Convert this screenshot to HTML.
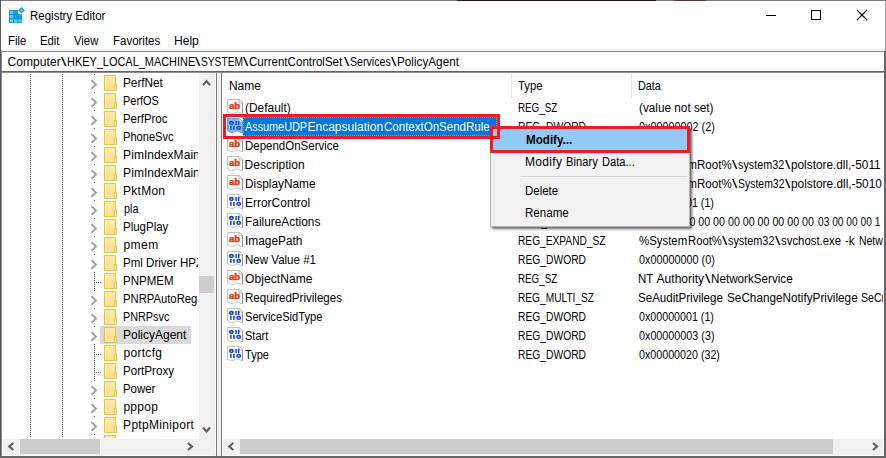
<!DOCTYPE html>
<html><head><meta charset="utf-8"><title>Registry Editor</title>
<style>
html,body{margin:0;padding:0}
body{width:886px;height:458px;position:relative;overflow:hidden;background:#fff;font-family:'Liberation Sans',sans-serif;font-size:12px;color:#000}
.a{position:absolute}
.t{position:absolute;white-space:pre;line-height:14px;transform-origin:0 0}
.clip{position:absolute;overflow:hidden}
svg{position:absolute;overflow:visible}
</style></head>
<body>
<!-- window frame -->
<div class="a" style="left:0px;top:0px;width:886px;height:1px;background:#7b7b7b;"></div><div class="a" style="left:457px;top:0px;width:199px;height:1px;background:#22121f;"></div><div class="a" style="left:674px;top:0px;width:32px;height:1px;background:#5a3326;"></div><div class="a" style="left:0px;top:0px;width:1px;height:458px;background:#585858;"></div><div class="a" style="left:885px;top:1px;width:1px;height:50px;background:#a0a0a0;"></div><div class="a" style="left:1px;top:49px;width:884px;height:2px;background:#f2f2f2;"></div><div class="a" style="left:1px;top:51px;width:884px;height:1px;background:#8a8a8a;"></div><div class="a" style="left:1px;top:52px;width:1px;height:404px;background:#8a8a8a;"></div><div class="a" style="left:1px;top:71px;width:884px;height:1px;background:#636363;"></div><div class="a" style="left:1px;top:72px;width:884px;height:1px;background:#8e8e8e;"></div><div class="a" style="left:884px;top:51px;width:2px;height:407px;background:#666;"></div><div class="a" style="left:0px;top:456px;width:886px;height:2px;background:#666;"></div><!-- title bar -->
<svg style="left:9px;top:7px" width="17" height="17" viewBox="0 0 17 17">
<path d="M0,3 H8.9 V7.2 H13.1 V16 H0 Z" fill="#0f86cc"/>
<g fill="#5ad2ff"><rect x="0.7" y="3.7" width="3.5" height="3.4"/><rect x="0.7" y="8" width="3.5" height="3.4"/><rect x="0.7" y="12.3" width="3.5" height="3.2"/><rect x="5" y="12.3" width="3.5" height="3.2"/><rect x="9.3" y="12.3" width="3.2" height="3.2"/></g>
<g fill="#1ba3e4"><rect x="5" y="3.7" width="3.4" height="3.4"/><rect x="5" y="8" width="3.5" height="3.4"/><rect x="9.3" y="8" width="3.2" height="3.4"/></g>
<polygon points="12.5,0.8 15,3.3 12.5,5.8 10,3.3" fill="#5ad2ff" stroke="#0f86cc" stroke-width="1.1"/>
</svg>
<svg style="left:760px;top:5px" width="115" height="20" viewBox="0 0 115 20" fill="none" stroke="#000" stroke-width="1">
<line x1="6" y1="10.5" x2="16" y2="10.5"/>
<rect x="51.5" y="5.5" width="9" height="9"/>
<line x1="97" y1="5" x2="107" y2="15" stroke-width="1.1"/><line x1="107" y1="5" x2="97" y2="15" stroke-width="1.1"/>
</svg>
<span class="t" style="left:30.2px;top:9px;transform:scaleX(0.9575);">Registry Editor</span>
<!-- menu bar -->
<div><span class="t" style="left:8.0px;top:34px;transform:scaleX(0.9485);">File</span><span class="t" style="left:39.9px;top:34px;transform:scaleX(0.944);">Edit</span><span class="t" style="left:74.3px;top:34px;transform:scaleX(0.9434);">View</span><span class="t" style="left:112.9px;top:34px;transform:scaleX(0.9567);">Favorites</span><span class="t" style="left:174.0px;top:34px;transform:scaleX(1.0065);">Help</span></div>
<!-- address bar -->
<div><span class="t" style="left:7.6px;top:55px;letter-spacing:0.06px;">Computer</span><span class="t" style="left:61.0px;top:55px;transform:scaleX(1.6);">\</span><span class="t" style="left:66.5px;top:55px;transform:scaleX(0.9111);">HKEY_LOCAL_MACHINE</span><span class="t" style="left:195.1px;top:55px;transform:scaleX(1.6);">\</span><span class="t" style="left:200.8px;top:55px;transform:scaleX(0.8498);">SYSTEM</span><span class="t" style="left:242.9px;top:55px;transform:scaleX(1.6);">\</span><span class="t" style="left:248.9px;top:55px;transform:scaleX(0.9643);">CurrentControlSet</span><span class="t" style="left:343.6px;top:55px;transform:scaleX(1.6);">\</span><span class="t" style="left:349.7px;top:55px;transform:scaleX(0.8844);">Services</span><span class="t" style="left:391.3px;top:55px;transform:scaleX(1.6);">\</span><span class="t" style="left:397.0px;top:55px;transform:scaleX(0.9773);">PolicyAgent</span></div>
<!-- tree view -->
<div class="clip" style="left:2px;top:73px;width:196px;height:365px">
<div class="a" style="left:28px;top:1px;width:1px;height:366px;background:transparent;background-image:linear-gradient(#5a5a5a 50%,transparent 50%);background-size:1px 2px;"></div><div class="a" style="left:60px;top:1px;width:1px;height:366px;background:transparent;background-image:linear-gradient(#5a5a5a 50%,transparent 50%);background-size:1px 2px;"></div><div class="a" style="left:92px;top:1px;width:1px;height:1px;background:#5a5a5a;"></div><svg style="left:88px;top:6px" width="8" height="11" viewBox="0 0 8 11"><polyline points="1.5,1.2 6,5.5 1.5,9.8" fill="none" stroke="#a0a0a0" stroke-width="1.9"/></svg><svg style="left:102px;top:2px" width="13" height="16" viewBox="0 0 13 16"><rect x="0.5" y="0.5" width="11" height="15" fill="url(#fg)" stroke="#e6c153"/><rect x="10.5" y="9.5" width="2" height="6" fill="#ffedb0" stroke="#e6c153"/></svg><span class="t" style="left:121.2px;top:3px;transform:scaleX(0.9805);">PerfNet</span>
<div class="a" style="left:92px;top:19px;width:1px;height:1px;background:#5a5a5a;"></div><svg style="left:88px;top:24px" width="8" height="11" viewBox="0 0 8 11"><polyline points="1.5,1.2 6,5.5 1.5,9.8" fill="none" stroke="#a0a0a0" stroke-width="1.9"/></svg><svg style="left:102px;top:20px" width="13" height="16" viewBox="0 0 13 16"><rect x="0.5" y="0.5" width="11" height="15" fill="url(#fg)" stroke="#e6c153"/><rect x="10.5" y="9.5" width="2" height="6" fill="#ffedb0" stroke="#e6c153"/></svg><span class="t" style="left:121.2px;top:21px;transform:scaleX(0.9128);">PerfOS</span>
<div class="a" style="left:92px;top:37px;width:1px;height:1px;background:#5a5a5a;"></div><svg style="left:88px;top:42px" width="8" height="11" viewBox="0 0 8 11"><polyline points="1.5,1.2 6,5.5 1.5,9.8" fill="none" stroke="#a0a0a0" stroke-width="1.9"/></svg><svg style="left:102px;top:38px" width="13" height="16" viewBox="0 0 13 16"><rect x="0.5" y="0.5" width="11" height="15" fill="url(#fg)" stroke="#e6c153"/><rect x="10.5" y="9.5" width="2" height="6" fill="#ffedb0" stroke="#e6c153"/></svg><span class="t" style="left:121.2px;top:39px;transform:scaleX(0.9507);">PerfProc</span>
<div class="a" style="left:92px;top:55px;width:1px;height:1px;background:#5a5a5a;"></div><svg style="left:88px;top:60px" width="8" height="11" viewBox="0 0 8 11"><polyline points="1.5,1.2 6,5.5 1.5,9.8" fill="none" stroke="#a0a0a0" stroke-width="1.9"/></svg><svg style="left:102px;top:56px" width="13" height="16" viewBox="0 0 13 16"><rect x="0.5" y="0.5" width="11" height="15" fill="url(#fg)" stroke="#e6c153"/><rect x="10.5" y="9.5" width="2" height="6" fill="#ffedb0" stroke="#e6c153"/></svg><span class="t" style="left:121.2px;top:57px;transform:scaleX(0.9258);">PhoneSvc</span>
<div class="a" style="left:92px;top:73px;width:1px;height:1px;background:#5a5a5a;"></div><svg style="left:88px;top:78px" width="8" height="11" viewBox="0 0 8 11"><polyline points="1.5,1.2 6,5.5 1.5,9.8" fill="none" stroke="#a0a0a0" stroke-width="1.9"/></svg><svg style="left:102px;top:74px" width="13" height="16" viewBox="0 0 13 16"><rect x="0.5" y="0.5" width="11" height="15" fill="url(#fg)" stroke="#e6c153"/><rect x="10.5" y="9.5" width="2" height="6" fill="#ffedb0" stroke="#e6c153"/></svg><span class="t" style="left:121.1px;top:75px;letter-spacing:0.06px;">PimIndexMaintenanceSvc</span>
<div class="a" style="left:92px;top:91px;width:1px;height:1px;background:#5a5a5a;"></div><svg style="left:88px;top:96px" width="8" height="11" viewBox="0 0 8 11"><polyline points="1.5,1.2 6,5.5 1.5,9.8" fill="none" stroke="#a0a0a0" stroke-width="1.9"/></svg><svg style="left:102px;top:92px" width="13" height="16" viewBox="0 0 13 16"><rect x="0.5" y="0.5" width="11" height="15" fill="url(#fg)" stroke="#e6c153"/><rect x="10.5" y="9.5" width="2" height="6" fill="#ffedb0" stroke="#e6c153"/></svg><span class="t" style="left:121.1px;top:93px;letter-spacing:0.06px;">PimIndexMaintenanceSvc_5f1a2</span>
<div class="a" style="left:92px;top:109px;width:1px;height:1px;background:#5a5a5a;"></div><svg style="left:88px;top:114px" width="8" height="11" viewBox="0 0 8 11"><polyline points="1.5,1.2 6,5.5 1.5,9.8" fill="none" stroke="#a0a0a0" stroke-width="1.9"/></svg><svg style="left:102px;top:110px" width="13" height="16" viewBox="0 0 13 16"><rect x="0.5" y="0.5" width="11" height="15" fill="url(#fg)" stroke="#e6c153"/><rect x="10.5" y="9.5" width="2" height="6" fill="#ffedb0" stroke="#e6c153"/></svg><span class="t" style="left:121.1px;top:111px;letter-spacing:0.24px;">PktMon</span>
<div class="a" style="left:92px;top:127px;width:1px;height:1px;background:#5a5a5a;"></div><svg style="left:88px;top:132px" width="8" height="11" viewBox="0 0 8 11"><polyline points="1.5,1.2 6,5.5 1.5,9.8" fill="none" stroke="#a0a0a0" stroke-width="1.9"/></svg><svg style="left:102px;top:128px" width="13" height="16" viewBox="0 0 13 16"><rect x="0.5" y="0.5" width="11" height="15" fill="url(#fg)" stroke="#e6c153"/><rect x="10.5" y="9.5" width="2" height="6" fill="#ffedb0" stroke="#e6c153"/></svg><span class="t" style="left:121.5px;top:129px;transform:scaleX(0.9);">pla</span>
<div class="a" style="left:92px;top:145px;width:1px;height:1px;background:#5a5a5a;"></div><svg style="left:88px;top:150px" width="8" height="11" viewBox="0 0 8 11"><polyline points="1.5,1.2 6,5.5 1.5,9.8" fill="none" stroke="#a0a0a0" stroke-width="1.9"/></svg><svg style="left:102px;top:146px" width="13" height="16" viewBox="0 0 13 16"><rect x="0.5" y="0.5" width="11" height="15" fill="url(#fg)" stroke="#e6c153"/><rect x="10.5" y="9.5" width="2" height="6" fill="#ffedb0" stroke="#e6c153"/></svg><span class="t" style="left:121.2px;top:147px;transform:scaleX(0.9576);">PlugPlay</span>
<div class="a" style="left:92px;top:163px;width:1px;height:1px;background:#5a5a5a;"></div><svg style="left:88px;top:168px" width="8" height="11" viewBox="0 0 8 11"><polyline points="1.5,1.2 6,5.5 1.5,9.8" fill="none" stroke="#a0a0a0" stroke-width="1.9"/></svg><svg style="left:102px;top:164px" width="13" height="16" viewBox="0 0 13 16"><rect x="0.5" y="0.5" width="11" height="15" fill="url(#fg)" stroke="#e6c153"/><rect x="10.5" y="9.5" width="2" height="6" fill="#ffedb0" stroke="#e6c153"/></svg><span class="t" style="left:121.4px;top:165px;letter-spacing:0.48px;">pmem</span>
<div class="a" style="left:92px;top:181px;width:1px;height:1px;background:#5a5a5a;"></div><svg style="left:88px;top:186px" width="8" height="11" viewBox="0 0 8 11"><polyline points="1.5,1.2 6,5.5 1.5,9.8" fill="none" stroke="#a0a0a0" stroke-width="1.9"/></svg><svg style="left:102px;top:182px" width="13" height="16" viewBox="0 0 13 16"><rect x="0.5" y="0.5" width="11" height="15" fill="url(#fg)" stroke="#e6c153"/><rect x="10.5" y="9.5" width="2" height="6" fill="#ffedb0" stroke="#e6c153"/></svg><span class="t" style="left:121.2px;top:183px;transform:scaleX(0.9609);">Pml Driver HPZ12</span>
<div class="a" style="left:92px;top:199px;width:1px;height:18px;background:transparent;background-image:linear-gradient(#5a5a5a 50%,transparent 50%);background-size:1px 2px;"></div><div class="a" style="left:92px;top:209px;width:8px;height:1px;background:transparent;background-image:linear-gradient(90deg,#5a5a5a 50%,transparent 50%);background-size:2px 1px;"></div><svg style="left:102px;top:200px" width="13" height="16" viewBox="0 0 13 16"><rect x="0.5" y="0.5" width="11" height="15" fill="url(#fg)" stroke="#e6c153"/><rect x="10.5" y="9.5" width="2" height="6" fill="#ffedb0" stroke="#e6c153"/></svg><span class="t" style="left:121.2px;top:201px;transform:scaleX(0.961);">PNPMEM</span>
<div class="a" style="left:92px;top:217px;width:1px;height:1px;background:#5a5a5a;"></div><svg style="left:88px;top:222px" width="8" height="11" viewBox="0 0 8 11"><polyline points="1.5,1.2 6,5.5 1.5,9.8" fill="none" stroke="#a0a0a0" stroke-width="1.9"/></svg><svg style="left:102px;top:218px" width="13" height="16" viewBox="0 0 13 16"><rect x="0.5" y="0.5" width="11" height="15" fill="url(#fg)" stroke="#e6c153"/><rect x="10.5" y="9.5" width="2" height="6" fill="#ffedb0" stroke="#e6c153"/></svg><span class="t" style="left:121.2px;top:219px;transform:scaleX(0.9386);">PNRPAutoReg</span>
<div class="a" style="left:92px;top:235px;width:1px;height:1px;background:#5a5a5a;"></div><svg style="left:88px;top:240px" width="8" height="11" viewBox="0 0 8 11"><polyline points="1.5,1.2 6,5.5 1.5,9.8" fill="none" stroke="#a0a0a0" stroke-width="1.9"/></svg><svg style="left:102px;top:236px" width="13" height="16" viewBox="0 0 13 16"><rect x="0.5" y="0.5" width="11" height="15" fill="url(#fg)" stroke="#e6c153"/><rect x="10.5" y="9.5" width="2" height="6" fill="#ffedb0" stroke="#e6c153"/></svg><span class="t" style="left:121.2px;top:237px;transform:scaleX(0.9016);">PNRPsvc</span>
<div class="a" style="left:92px;top:253px;width:1px;height:1px;background:#5a5a5a;"></div><svg style="left:88px;top:258px" width="8" height="11" viewBox="0 0 8 11"><polyline points="1.5,1.2 6,5.5 1.5,9.8" fill="none" stroke="#a0a0a0" stroke-width="1.9"/></svg><div class="a" style="left:98px;top:253px;width:91px;height:18px;background:#d9d9d9;"></div><svg style="left:102px;top:254px" width="13" height="16" viewBox="0 0 13 16"><rect x="0.5" y="0.5" width="11" height="15" fill="url(#fg)" stroke="#e6c153"/><rect x="10.5" y="9.5" width="2" height="6" fill="#ffedb0" stroke="#e6c153"/></svg><span class="t" style="left:121.1px;top:255px;transform:scaleX(0.9991);">PolicyAgent</span>
<div class="a" style="left:92px;top:271px;width:1px;height:18px;background:transparent;background-image:linear-gradient(#5a5a5a 50%,transparent 50%);background-size:1px 2px;"></div><div class="a" style="left:92px;top:281px;width:8px;height:1px;background:transparent;background-image:linear-gradient(90deg,#5a5a5a 50%,transparent 50%);background-size:2px 1px;"></div><svg style="left:102px;top:272px" width="13" height="16" viewBox="0 0 13 16"><rect x="0.5" y="0.5" width="11" height="15" fill="url(#fg)" stroke="#e6c153"/><rect x="10.5" y="9.5" width="2" height="6" fill="#ffedb0" stroke="#e6c153"/></svg><span class="t" style="left:121.4px;top:273px;letter-spacing:0.32px;">portcfg</span>
<div class="a" style="left:92px;top:289px;width:1px;height:18px;background:transparent;background-image:linear-gradient(#5a5a5a 50%,transparent 50%);background-size:1px 2px;"></div><div class="a" style="left:92px;top:299px;width:8px;height:1px;background:transparent;background-image:linear-gradient(90deg,#5a5a5a 50%,transparent 50%);background-size:2px 1px;"></div><svg style="left:102px;top:290px" width="13" height="16" viewBox="0 0 13 16"><rect x="0.5" y="0.5" width="11" height="15" fill="url(#fg)" stroke="#e6c153"/><rect x="10.5" y="9.5" width="2" height="6" fill="#ffedb0" stroke="#e6c153"/></svg><span class="t" style="left:121.2px;top:291px;transform:scaleX(0.9685);">PortProxy</span>
<div class="a" style="left:92px;top:307px;width:1px;height:1px;background:#5a5a5a;"></div><svg style="left:88px;top:312px" width="8" height="11" viewBox="0 0 8 11"><polyline points="1.5,1.2 6,5.5 1.5,9.8" fill="none" stroke="#a0a0a0" stroke-width="1.9"/></svg><svg style="left:102px;top:308px" width="13" height="16" viewBox="0 0 13 16"><rect x="0.5" y="0.5" width="11" height="15" fill="url(#fg)" stroke="#e6c153"/><rect x="10.5" y="9.5" width="2" height="6" fill="#ffedb0" stroke="#e6c153"/></svg><span class="t" style="left:121.2px;top:309px;transform:scaleX(0.9522);">Power</span>
<div class="a" style="left:92px;top:325px;width:1px;height:1px;background:#5a5a5a;"></div><svg style="left:88px;top:330px" width="8" height="11" viewBox="0 0 8 11"><polyline points="1.5,1.2 6,5.5 1.5,9.8" fill="none" stroke="#a0a0a0" stroke-width="1.9"/></svg><svg style="left:102px;top:326px" width="13" height="16" viewBox="0 0 13 16"><rect x="0.5" y="0.5" width="11" height="15" fill="url(#fg)" stroke="#e6c153"/><rect x="10.5" y="9.5" width="2" height="6" fill="#ffedb0" stroke="#e6c153"/></svg><span class="t" style="left:121.4px;top:327px;letter-spacing:0.31px;">pppop</span>
<div class="a" style="left:92px;top:343px;width:1px;height:1px;background:#5a5a5a;"></div><svg style="left:88px;top:348px" width="8" height="11" viewBox="0 0 8 11"><polyline points="1.5,1.2 6,5.5 1.5,9.8" fill="none" stroke="#a0a0a0" stroke-width="1.9"/></svg><svg style="left:102px;top:344px" width="13" height="16" viewBox="0 0 13 16"><rect x="0.5" y="0.5" width="11" height="15" fill="url(#fg)" stroke="#e6c153"/><rect x="10.5" y="9.5" width="2" height="6" fill="#ffedb0" stroke="#e6c153"/></svg><span class="t" style="left:121.1px;top:345px;letter-spacing:0.3px;">PptpMiniport</span>
<div class="a" style="left:92px;top:361px;width:1px;height:1px;background:#5a5a5a;"></div><svg style="left:88px;top:366px" width="8" height="11" viewBox="0 0 8 11"><polyline points="1.5,1.2 6,5.5 1.5,9.8" fill="none" stroke="#a0a0a0" stroke-width="1.9"/></svg><svg style="left:102px;top:362px" width="13" height="16" viewBox="0 0 13 16"><rect x="0.5" y="0.5" width="11" height="15" fill="url(#fg)" stroke="#e6c153"/><rect x="10.5" y="9.5" width="2" height="6" fill="#ffedb0" stroke="#e6c153"/></svg>
</div>
<svg width="0" height="0" style="left:0;top:0"><defs><linearGradient id="fg" x1="0" y1="0" x2="0" y2="1"><stop offset="0" stop-color="#ffeaa6"/><stop offset="1" stop-color="#ffe08a"/></linearGradient></defs></svg>
<div class="a" style="left:199px;top:73px;width:16px;height:366px;background:#f0f0f0;"></div><div class="a" style="left:3px;top:439px;width:212px;height:16px;background:#f0f0f0;"></div><div class="a" style="left:199px;top:276px;width:15px;height:17px;background:#cdcdcd;"></div><div class="a" style="left:20px;top:439px;width:80px;height:15px;background:#cdcdcd;"></div><svg style="left:0;top:0" width="1" height="1"><polyline points="203.0,85.1 206.5,81.1 210.0,85.1" fill="none" stroke="#606060" stroke-width="2.2"/></svg><svg style="left:0;top:0" width="1" height="1"><polyline points="203.0,427.5 206.5,431.5 210.0,427.5" fill="none" stroke="#606060" stroke-width="2.2"/></svg><svg style="left:0;top:0" width="1" height="1"><polyline points="13.3,443.0 9.3,446.5 13.3,450.0" fill="none" stroke="#606060" stroke-width="2.2"/></svg><svg style="left:0;top:0" width="1" height="1"><polyline points="188.0,443.0 192.0,446.5 188.0,450.0" fill="none" stroke="#606060" stroke-width="2.2"/></svg><div class="a" style="left:216px;top:73px;width:1px;height:383px;background:#7a7a7a;"></div><div class="a" style="left:217px;top:73px;width:4px;height:383px;background:#f0f0f0;"></div><div class="a" style="left:221px;top:73px;width:1px;height:383px;background:#7a7a7a;"></div>
<!-- list view -->
<div class="a" style="left:511px;top:74px;width:1px;height:24px;background:#e5e5e5;"></div><div class="a" style="left:631px;top:74px;width:1px;height:24px;background:#e5e5e5;"></div><span class="t" style="left:228.9px;top:79px;letter-spacing:0.02px;">Name</span><span class="t" style="left:518.0px;top:79px;transform:scaleX(0.9462);">Type</span><span class="t" style="left:638.3px;top:79px;transform:scaleX(0.902);">Data</span>
<div class="a" style="left:243px;top:117px;width:254px;height:19px;background:#0078d7;outline:1px dotted #e08a3c;outline-offset:-1px;"></div><svg style="left:227px;top:99px" width="16" height="16" viewBox="0 0 16 16"><path d="M0.5,0.5 H12 L15.5,4 V14.6 C13.5,15 12.5,13 10.5,13 C8,13 7,14.6 4.5,14.6 C3,14.6 2.5,13.2 0.5,13 Z" fill="#fff" stroke="#c4c4c4"/><path d="M12,0.5 L15.5,4 V14.6" fill="none" stroke="#8f8f8f"/><path d="M12,0.5 V4 H15.5" fill="#fff" stroke="#a0a0a0" stroke-width="0.8"/><text x="1.9" y="10.1" font-family="'Liberation Sans',sans-serif" font-size="9.6" font-weight="bold" fill="#d8401a" stroke="#d8401a" stroke-width="0.5" letter-spacing="0">ab</text></svg><span><span class="t" style="left:244.9px;top:101px;transform:scaleX(0.9952);">(Default)</span></span><span class="t" style="left:518.4px;top:101px;transform:scaleX(0.8168);">REG_SZ</span><div class="clip" style="left:632px;top:98px;width:251px;height:19px"><span class="t" style="left:6.7px;top:3px;transform:scaleX(0.98);">(value not set)</span></div>
<svg style="left:227px;top:118px" width="16" height="16" viewBox="0 0 16 16"><path d="M0.5,0.5 H12 L15.5,4 V14.6 C13.5,15 12.5,13 10.5,13 C8,13 7,14.6 4.5,14.6 C3,14.6 2.5,13.2 0.5,13 Z" fill="#86b8ec" stroke="#5f9fe2"/><path d="M12,0.5 L15.5,4 V14.6" fill="none" stroke="#8f8f8f"/><path d="M12,0.5 V4 H15.5" fill="#fff" stroke="#a0a0a0" stroke-width="0.8"/><g fill="none" stroke="#1458d0" stroke-width="1.6"><ellipse cx="4.4" cy="5" rx="1.75" ry="1.35"/><ellipse cx="11.7" cy="9.9" rx="1.75" ry="1.35"/></g><g fill="#1458d0"><rect x="8.3" y="3" width="1.5" height="4"/><rect x="10.8" y="3" width="1.6" height="4"/><rect x="3.1" y="7.9" width="1.5" height="4"/><rect x="6.1" y="7.9" width="1.6" height="4"/></g></svg><span><span class="t" style="left:245.2px;top:120px;transform:scaleX(0.9027);color:#fff;">AssumeUDP</span><span class="t" style="left:307.4px;top:120px;letter-spacing:0.03px;color:#fff;">Encapsulation</span><span class="t" style="left:384.2px;top:120px;transform:scaleX(0.96);color:#fff;">ContextOnSendRule</span></span><span class="t" style="left:518.4px;top:120px;transform:scaleX(0.8575);">REG_DWORD</span><div class="clip" style="left:632px;top:117px;width:251px;height:19px"><span class="t" style="left:6.9px;top:3px;transform:scaleX(0.9018);">0x00000002 (2)</span></div>
<svg style="left:227px;top:137px" width="16" height="16" viewBox="0 0 16 16"><path d="M0.5,0.5 H12 L15.5,4 V14.6 C13.5,15 12.5,13 10.5,13 C8,13 7,14.6 4.5,14.6 C3,14.6 2.5,13.2 0.5,13 Z" fill="#fff" stroke="#c4c4c4"/><path d="M12,0.5 L15.5,4 V14.6" fill="none" stroke="#8f8f8f"/><path d="M12,0.5 V4 H15.5" fill="#fff" stroke="#a0a0a0" stroke-width="0.8"/><text x="1.9" y="10.1" font-family="'Liberation Sans',sans-serif" font-size="9.6" font-weight="bold" fill="#d8401a" stroke="#d8401a" stroke-width="0.5" letter-spacing="0">ab</text></svg><span><span class="t" style="left:244.7px;top:139px;transform:scaleX(0.9578);">DependOnService</span></span><span class="t" style="left:518.4px;top:139px;transform:scaleX(0.8471);">REG_MULTI_SZ</span>
<svg style="left:227px;top:156px" width="16" height="16" viewBox="0 0 16 16"><path d="M0.5,0.5 H12 L15.5,4 V14.6 C13.5,15 12.5,13 10.5,13 C8,13 7,14.6 4.5,14.6 C3,14.6 2.5,13.2 0.5,13 Z" fill="#fff" stroke="#c4c4c4"/><path d="M12,0.5 L15.5,4 V14.6" fill="none" stroke="#8f8f8f"/><path d="M12,0.5 V4 H15.5" fill="#fff" stroke="#a0a0a0" stroke-width="0.8"/><text x="1.9" y="10.1" font-family="'Liberation Sans',sans-serif" font-size="9.6" font-weight="bold" fill="#d8401a" stroke="#d8401a" stroke-width="0.5" letter-spacing="0">ab</text></svg><span><span class="t" style="left:244.6px;top:158px;">Description</span></span><span class="t" style="left:518.4px;top:158px;transform:scaleX(0.8168);">REG_SZ</span><div class="clip" style="left:632px;top:155px;width:251px;height:19px"><span class="t" style="left:6.5px;top:3px;transform:scaleX(0.9203);">@%System</span><span class="t" style="left:64.9px;top:3px;transform:scaleX(0.9648);">Root%</span><span class="t" style="left:100.1px;top:3px;transform:scaleX(1.6);">\</span><span class="t" style="left:106.1px;top:3px;transform:scaleX(0.8981);">system32</span><span class="t" style="left:152.5px;top:3px;transform:scaleX(1.6);">\</span><span class="t" style="left:158.9px;top:3px;transform:scaleX(0.9833);">polstore.dll,-5011</span></div>
<svg style="left:227px;top:175px" width="16" height="16" viewBox="0 0 16 16"><path d="M0.5,0.5 H12 L15.5,4 V14.6 C13.5,15 12.5,13 10.5,13 C8,13 7,14.6 4.5,14.6 C3,14.6 2.5,13.2 0.5,13 Z" fill="#fff" stroke="#c4c4c4"/><path d="M12,0.5 L15.5,4 V14.6" fill="none" stroke="#8f8f8f"/><path d="M12,0.5 V4 H15.5" fill="#fff" stroke="#a0a0a0" stroke-width="0.8"/><text x="1.9" y="10.1" font-family="'Liberation Sans',sans-serif" font-size="9.6" font-weight="bold" fill="#d8401a" stroke="#d8401a" stroke-width="0.5" letter-spacing="0">ab</text></svg><span><span class="t" style="left:244.7px;top:177px;transform:scaleX(0.9895);">DisplayName</span></span><span class="t" style="left:518.4px;top:177px;transform:scaleX(0.8168);">REG_SZ</span><div class="clip" style="left:632px;top:174px;width:251px;height:19px"><span class="t" style="left:6.5px;top:3px;transform:scaleX(0.9203);">@%System</span><span class="t" style="left:64.9px;top:3px;transform:scaleX(0.9648);">Root%</span><span class="t" style="left:100.1px;top:3px;transform:scaleX(1.6);">\</span><span class="t" style="left:105.5px;top:3px;transform:scaleX(0.8705);">System32</span><span class="t" style="left:152.5px;top:3px;transform:scaleX(1.6);">\</span><span class="t" style="left:158.9px;top:3px;transform:scaleX(0.987);">polstore.dll,-5010</span></div>
<svg style="left:227px;top:194px" width="16" height="16" viewBox="0 0 16 16"><path d="M0.5,0.5 H12 L15.5,4 V14.6 C13.5,15 12.5,13 10.5,13 C8,13 7,14.6 4.5,14.6 C3,14.6 2.5,13.2 0.5,13 Z" fill="#fff" stroke="#c4c4c4"/><path d="M12,0.5 L15.5,4 V14.6" fill="none" stroke="#8f8f8f"/><path d="M12,0.5 V4 H15.5" fill="#fff" stroke="#a0a0a0" stroke-width="0.8"/><g fill="none" stroke="#1040dc" stroke-width="1.6"><ellipse cx="4.4" cy="5" rx="1.75" ry="1.35"/><ellipse cx="11.7" cy="9.9" rx="1.75" ry="1.35"/></g><g fill="#1040dc"><rect x="8.3" y="3" width="1.5" height="4"/><rect x="10.8" y="3" width="1.6" height="4"/><rect x="3.1" y="7.9" width="1.5" height="4"/><rect x="6.1" y="7.9" width="1.6" height="4"/></g></svg><span><span class="t" style="left:244.7px;top:196px;transform:scaleX(0.997);">ErrorControl</span></span><span class="t" style="left:518.4px;top:196px;transform:scaleX(0.8575);">REG_DWORD</span><div class="clip" style="left:632px;top:193px;width:251px;height:19px"><span class="t" style="left:6.9px;top:3px;transform:scaleX(0.891);">0x00000001 (1)</span></div>
<svg style="left:227px;top:213px" width="16" height="16" viewBox="0 0 16 16"><path d="M0.5,0.5 H12 L15.5,4 V14.6 C13.5,15 12.5,13 10.5,13 C8,13 7,14.6 4.5,14.6 C3,14.6 2.5,13.2 0.5,13 Z" fill="#fff" stroke="#c4c4c4"/><path d="M12,0.5 L15.5,4 V14.6" fill="none" stroke="#8f8f8f"/><path d="M12,0.5 V4 H15.5" fill="#fff" stroke="#a0a0a0" stroke-width="0.8"/><g fill="none" stroke="#1040dc" stroke-width="1.6"><ellipse cx="4.4" cy="5" rx="1.75" ry="1.35"/><ellipse cx="11.7" cy="9.9" rx="1.75" ry="1.35"/></g><g fill="#1040dc"><rect x="8.3" y="3" width="1.5" height="4"/><rect x="10.8" y="3" width="1.6" height="4"/><rect x="3.1" y="7.9" width="1.5" height="4"/><rect x="6.1" y="7.9" width="1.6" height="4"/></g></svg><span><span class="t" style="left:244.7px;top:215px;transform:scaleX(0.9913);">FailureActions</span></span><span class="t" style="left:518.3px;top:215px;transform:scaleX(0.8896);">REG_BINARY</span><div class="clip" style="left:632px;top:212px;width:251px;height:19px"><span class="t" style="left:6.9px;top:3px;transform:scaleX(0.8887);">80 51 01 00 00 00 00 00 00 00 00 00 </span><span class="t" style="left:186.3px;top:3px;transform:scaleX(0.8491);">03 00 00 00 1</span></div>
<svg style="left:227px;top:232px" width="16" height="16" viewBox="0 0 16 16"><path d="M0.5,0.5 H12 L15.5,4 V14.6 C13.5,15 12.5,13 10.5,13 C8,13 7,14.6 4.5,14.6 C3,14.6 2.5,13.2 0.5,13 Z" fill="#fff" stroke="#c4c4c4"/><path d="M12,0.5 L15.5,4 V14.6" fill="none" stroke="#8f8f8f"/><path d="M12,0.5 V4 H15.5" fill="#fff" stroke="#a0a0a0" stroke-width="0.8"/><text x="1.9" y="10.1" font-family="'Liberation Sans',sans-serif" font-size="9.6" font-weight="bold" fill="#d8401a" stroke="#d8401a" stroke-width="0.5" letter-spacing="0">ab</text></svg><span><span class="t" style="left:244.5px;top:234px;transform:scaleX(0.9898);">ImagePath</span></span><span class="t" style="left:518.4px;top:234px;transform:scaleX(0.8484);">REG_EXPAND_SZ</span><div class="clip" style="left:632px;top:231px;width:251px;height:19px"><span class="t" style="left:6.9px;top:3px;transform:scaleX(0.9518);">%System</span><span class="t" style="left:55.9px;top:3px;transform:scaleX(0.9415);">Root%</span><span class="t" style="left:90.4px;top:3px;transform:scaleX(1.6);">\</span><span class="t" style="left:96.3px;top:3px;transform:scaleX(0.9039);">system32</span><span class="t" style="left:142.8px;top:3px;transform:scaleX(1.6);">\</span><span class="t" style="left:148.7px;top:3px;transform:scaleX(0.9493);">svchost.exe </span><span class="t" style="left:213.4px;top:3px;transform:scaleX(0.9459);">-k </span><span class="t" style="left:227.1px;top:3px;transform:scaleX(0.8719);">NetworkServiceNetworkRestricted -p</span></div>
<svg style="left:227px;top:251px" width="16" height="16" viewBox="0 0 16 16"><path d="M0.5,0.5 H12 L15.5,4 V14.6 C13.5,15 12.5,13 10.5,13 C8,13 7,14.6 4.5,14.6 C3,14.6 2.5,13.2 0.5,13 Z" fill="#fff" stroke="#c4c4c4"/><path d="M12,0.5 L15.5,4 V14.6" fill="none" stroke="#8f8f8f"/><path d="M12,0.5 V4 H15.5" fill="#fff" stroke="#a0a0a0" stroke-width="0.8"/><g fill="none" stroke="#1040dc" stroke-width="1.6"><ellipse cx="4.4" cy="5" rx="1.75" ry="1.35"/><ellipse cx="11.7" cy="9.9" rx="1.75" ry="1.35"/></g><g fill="#1040dc"><rect x="8.3" y="3" width="1.5" height="4"/><rect x="10.8" y="3" width="1.6" height="4"/><rect x="3.1" y="7.9" width="1.5" height="4"/><rect x="6.1" y="7.9" width="1.6" height="4"/></g></svg><span><span class="t" style="left:244.7px;top:253px;transform:scaleX(0.9615);">New Value #1</span></span><span class="t" style="left:518.4px;top:253px;transform:scaleX(0.8575);">REG_DWORD</span><div class="clip" style="left:632px;top:250px;width:251px;height:19px"><span class="t" style="left:6.9px;top:3px;transform:scaleX(0.9018);">0x00000000 (0)</span></div>
<svg style="left:227px;top:270px" width="16" height="16" viewBox="0 0 16 16"><path d="M0.5,0.5 H12 L15.5,4 V14.6 C13.5,15 12.5,13 10.5,13 C8,13 7,14.6 4.5,14.6 C3,14.6 2.5,13.2 0.5,13 Z" fill="#fff" stroke="#c4c4c4"/><path d="M12,0.5 L15.5,4 V14.6" fill="none" stroke="#8f8f8f"/><path d="M12,0.5 V4 H15.5" fill="#fff" stroke="#a0a0a0" stroke-width="0.8"/><text x="1.9" y="10.1" font-family="'Liberation Sans',sans-serif" font-size="9.6" font-weight="bold" fill="#d8401a" stroke="#d8401a" stroke-width="0.5" letter-spacing="0">ab</text></svg><span><span class="t" style="left:245.1px;top:272px;letter-spacing:0.08px;">ObjectName</span></span><span class="t" style="left:518.4px;top:272px;transform:scaleX(0.8168);">REG_SZ</span><div class="clip" style="left:632px;top:269px;width:251px;height:19px"><span class="t" style="left:6.2px;top:3px;transform:scaleX(0.9546);">NT </span><span class="t" style="left:24.6px;top:3px;letter-spacing:0.01px;">Authority</span><span class="t" style="left:72.9px;top:3px;transform:scaleX(1.6);">\</span><span class="t" style="left:79.0px;top:3px;transform:scaleX(0.9722);">NetworkService</span></div>
<svg style="left:227px;top:289px" width="16" height="16" viewBox="0 0 16 16"><path d="M0.5,0.5 H12 L15.5,4 V14.6 C13.5,15 12.5,13 10.5,13 C8,13 7,14.6 4.5,14.6 C3,14.6 2.5,13.2 0.5,13 Z" fill="#fff" stroke="#c4c4c4"/><path d="M12,0.5 L15.5,4 V14.6" fill="none" stroke="#8f8f8f"/><path d="M12,0.5 V4 H15.5" fill="#fff" stroke="#a0a0a0" stroke-width="0.8"/><text x="1.9" y="10.1" font-family="'Liberation Sans',sans-serif" font-size="9.6" font-weight="bold" fill="#d8401a" stroke="#d8401a" stroke-width="0.5" letter-spacing="0">ab</text></svg><span><span class="t" style="left:244.7px;top:291px;transform:scaleX(0.9625);">RequiredPrivileges</span></span><span class="t" style="left:518.4px;top:291px;transform:scaleX(0.8471);">REG_MULTI_SZ</span><div class="clip" style="left:632px;top:288px;width:251px;height:19px"><span class="t" style="left:6.4px;top:3px;transform:scaleX(0.9635);">SeAuditPrivilege </span><span class="t" style="left:95.4px;top:3px;transform:scaleX(0.9796);">SeChangeNotifyPrivilege </span><span class="t" style="left:229.0px;top:3px;transform:scaleX(0.8821);">SeCreateGlobalPrivilege</span></div>
<svg style="left:227px;top:308px" width="16" height="16" viewBox="0 0 16 16"><path d="M0.5,0.5 H12 L15.5,4 V14.6 C13.5,15 12.5,13 10.5,13 C8,13 7,14.6 4.5,14.6 C3,14.6 2.5,13.2 0.5,13 Z" fill="#fff" stroke="#c4c4c4"/><path d="M12,0.5 L15.5,4 V14.6" fill="none" stroke="#8f8f8f"/><path d="M12,0.5 V4 H15.5" fill="#fff" stroke="#a0a0a0" stroke-width="0.8"/><g fill="none" stroke="#1040dc" stroke-width="1.6"><ellipse cx="4.4" cy="5" rx="1.75" ry="1.35"/><ellipse cx="11.7" cy="9.9" rx="1.75" ry="1.35"/></g><g fill="#1040dc"><rect x="8.3" y="3" width="1.5" height="4"/><rect x="10.8" y="3" width="1.6" height="4"/><rect x="3.1" y="7.9" width="1.5" height="4"/><rect x="6.1" y="7.9" width="1.6" height="4"/></g></svg><span><span class="t" style="left:244.9px;top:310px;transform:scaleX(0.9279);">ServiceSidType</span></span><span class="t" style="left:518.4px;top:310px;transform:scaleX(0.8575);">REG_DWORD</span><div class="clip" style="left:632px;top:307px;width:251px;height:19px"><span class="t" style="left:6.9px;top:3px;transform:scaleX(0.891);">0x00000001 (1)</span></div>
<svg style="left:227px;top:327px" width="16" height="16" viewBox="0 0 16 16"><path d="M0.5,0.5 H12 L15.5,4 V14.6 C13.5,15 12.5,13 10.5,13 C8,13 7,14.6 4.5,14.6 C3,14.6 2.5,13.2 0.5,13 Z" fill="#fff" stroke="#c4c4c4"/><path d="M12,0.5 L15.5,4 V14.6" fill="none" stroke="#8f8f8f"/><path d="M12,0.5 V4 H15.5" fill="#fff" stroke="#a0a0a0" stroke-width="0.8"/><g fill="none" stroke="#1040dc" stroke-width="1.6"><ellipse cx="4.4" cy="5" rx="1.75" ry="1.35"/><ellipse cx="11.7" cy="9.9" rx="1.75" ry="1.35"/></g><g fill="#1040dc"><rect x="8.3" y="3" width="1.5" height="4"/><rect x="10.8" y="3" width="1.6" height="4"/><rect x="3.1" y="7.9" width="1.5" height="4"/><rect x="6.1" y="7.9" width="1.6" height="4"/></g></svg><span><span class="t" style="left:244.9px;top:329px;transform:scaleX(0.9197);">Start</span></span><span class="t" style="left:518.4px;top:329px;transform:scaleX(0.8575);">REG_DWORD</span><div class="clip" style="left:632px;top:326px;width:251px;height:19px"><span class="t" style="left:6.9px;top:3px;transform:scaleX(0.898);">0x00000003 (3)</span></div>
<svg style="left:227px;top:346px" width="16" height="16" viewBox="0 0 16 16"><path d="M0.5,0.5 H12 L15.5,4 V14.6 C13.5,15 12.5,13 10.5,13 C8,13 7,14.6 4.5,14.6 C3,14.6 2.5,13.2 0.5,13 Z" fill="#fff" stroke="#c4c4c4"/><path d="M12,0.5 L15.5,4 V14.6" fill="none" stroke="#8f8f8f"/><path d="M12,0.5 V4 H15.5" fill="#fff" stroke="#a0a0a0" stroke-width="0.8"/><g fill="none" stroke="#1040dc" stroke-width="1.6"><ellipse cx="4.4" cy="5" rx="1.75" ry="1.35"/><ellipse cx="11.7" cy="9.9" rx="1.75" ry="1.35"/></g><g fill="#1040dc"><rect x="8.3" y="3" width="1.5" height="4"/><rect x="10.8" y="3" width="1.6" height="4"/><rect x="3.1" y="7.9" width="1.5" height="4"/><rect x="6.1" y="7.9" width="1.6" height="4"/></g></svg><span><span class="t" style="left:245.3px;top:348px;transform:scaleX(0.9239);">Type</span></span><span class="t" style="left:518.4px;top:348px;transform:scaleX(0.8575);">REG_DWORD</span><div class="clip" style="left:632px;top:345px;width:251px;height:19px"><span class="t" style="left:6.9px;top:3px;transform:scaleX(0.8916);">0x00000020 (32)</span></div>
<div class="a" style="left:223px;top:439px;width:660px;height:16px;background:#f0f0f0;"></div><div class="a" style="left:240px;top:439px;width:593px;height:15px;background:#cdcdcd;"></div><svg style="left:0;top:0" width="1" height="1"><polyline points="233.3,443.0 229.3,446.5 233.3,450.0" fill="none" stroke="#606060" stroke-width="2.2"/></svg><svg style="left:0;top:0" width="1" height="1"><polyline points="873.0,443.0 877.0,446.5 873.0,450.0" fill="none" stroke="#606060" stroke-width="2.2"/></svg>
<!-- context menu -->
<div class="a" style="left:490px;top:127px;width:200px;height:100px;background:#f2f2f2;box-sizing:border-box;border:1px solid #b4b4b4;box-shadow:2px 2px 2.5px rgba(0,0,0,0.6);"></div><div class="a" style="left:491px;top:128px;width:30px;height:98px;background:#f0f0f0;"></div><div class="a" style="left:493px;top:129px;width:194px;height:21px;background:#91c9f7;"></div><div class="a" style="left:521px;top:176px;width:166px;height:1px;background:#d4d4d4;"></div><span class="t" style="left:525.7px;top:133px;transform:scaleX(0.9685);font-weight:bold;">Modify...</span><span class="t" style="left:524.9px;top:155px;letter-spacing:0.34px;">Modify </span><span class="t" style="left:566.2px;top:155px;transform:scaleX(0.9326);">Binary </span><span class="t" style="left:602.4px;top:155px;transform:scaleX(0.9276);">Data...</span><span class="t" style="left:524.9px;top:184px;transform:scaleX(0.9558);">Delete</span><span class="t" style="left:524.9px;top:206px;transform:scaleX(0.963);">Rename</span>
<!-- highlight boxes -->
<div class="a" style="left:223px;top:114px;width:277px;height:25px;box-sizing:border-box;border:3px solid #ed1c24"></div><div class="a" style="left:490px;top:126px;width:200px;height:27px;box-sizing:border-box;border:3px solid #ed1c24"></div>
</body></html>
